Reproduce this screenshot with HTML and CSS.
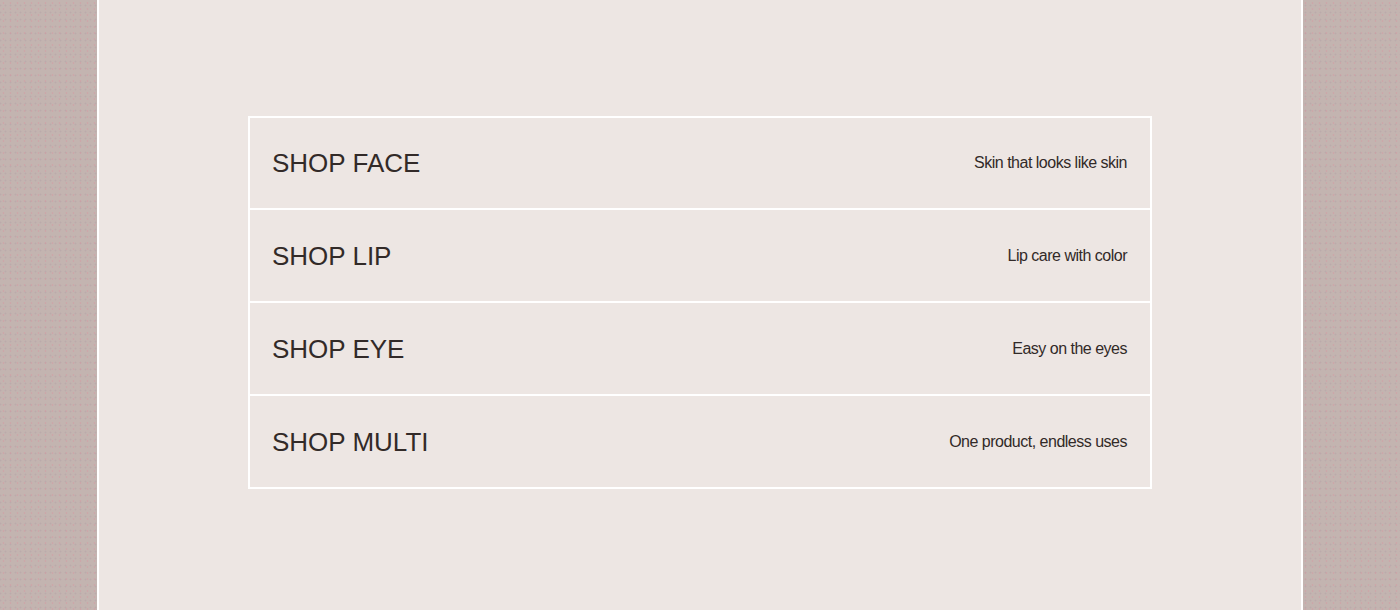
FILE: index.html
```html
<!DOCTYPE html>
<html>
<head>
<meta charset="utf-8">
<link rel="stylesheet" href="styles.css">
</head>
<body>
<div class="page">
  <main class="panel">
    <nav class="menu">
      <a class="row" href="#"><span class="title">SHOP FACE</span><span class="desc">Skin that looks like skin</span></a>
      <a class="row" href="#"><span class="title">SHOP LIP</span><span class="desc">Lip care with color</span></a>
      <a class="row" href="#"><span class="title">SHOP EYE</span><span class="desc">Easy on the eyes</span></a>
      <a class="row" href="#"><span class="title">SHOP MULTI</span><span class="desc">One product, endless uses</span></a>
    </nav>
  </main>
</div>
</body>
</html>
```

FILE: styles.css
```css
html, body {
  margin: 0;
  padding: 0;
  height: 100%;
}
body {
  background-color: #c3b4b0;
  background-image:
    radial-gradient(circle, rgba(215, 150, 160, 0.45) 0.7px, transparent 1.2px),
    radial-gradient(circle, rgba(180, 160, 165, 0.5) 0.7px, transparent 1.2px);
  background-size: 7px 6px, 5px 7px;
  background-position: 0 0, 3px 2px;
  font-family: "Liberation Sans", Arial, sans-serif;
  color: #322a28;
}
.page {
  display: flex;
  justify-content: center;
  height: 610px;
  padding: 0 97px;
  box-sizing: border-box;
}
.panel {
  flex: 1;
  background: #ede6e3;
  border-left: 2px solid #ffffff;
  border-right: 2px solid #ffffff;
  display: flex;
  justify-content: center;
  align-items: flex-start;
  padding-top: 116px;
}
.menu {
  width: 904px;
  box-sizing: border-box;
  border: 2px solid #ffffff;
  border-bottom: none;
  display: flex;
  flex-direction: column;
}
.row {
  display: flex;
  align-items: center;
  justify-content: space-between;
  height: 93px;
  box-sizing: border-box;
  padding: 0 23px 0 22px;
  border-bottom: 2px solid #ffffff;
  text-decoration: none;
  color: #322a28;
}
.row:first-child {
  height: 92px;
}
.title {
  font-size: 26px;
  line-height: 1;
}
.desc {
  font-size: 16px;
  letter-spacing: -0.5px;
  line-height: 1;
}
```
